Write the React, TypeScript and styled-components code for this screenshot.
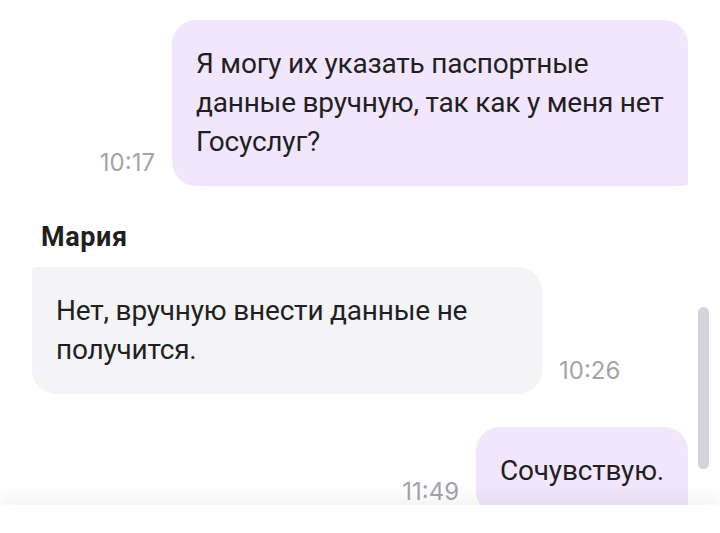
import React from "react";
import styled, { createGlobalStyle } from "styled-components";

const Global = createGlobalStyle`
  html, body { margin: 0; padding: 0; background: #ffffff; }
  body { font-family: Roboto, "Noto Sans", sans-serif; -webkit-font-smoothing: antialiased; }
`;

const Screen = styled.div`
  width: 720px;
  height: 533px;
  display: flex;
  flex-direction: column;
  position: relative;
  overflow: hidden;
  background: #fff;
`;

const Feed = styled.div`
  height: 505px;
  flex: none;
  overflow: hidden;
  display: flex;
  flex-direction: column;
  padding: 20px 32px 0 32px;
  box-sizing: border-box;
`;

const Row = styled.div<{ $out?: boolean; $mt?: number }>`
  display: flex;
  flex-direction: ${(p) => (p.$out ? "row-reverse" : "row")};
  align-items: flex-end;
  gap: 17px;
  margin-top: ${(p) => p.$mt ?? 0}px;
  flex: none;
`;

const Bubble = styled.div<{ $out?: boolean; $max: number }>`
  max-width: ${(p) => p.$max}px;
  box-sizing: border-box;
  padding: 24px 24px 25px;
  font-size: 28px;
  line-height: 39px;
  letter-spacing: -0.2px;
  color: #1f1f24;
  background: ${(p) => (p.$out ? "#f2e6fc" : "#f4f4f6")};
  border-radius: ${(p) => (p.$out ? "24px 24px 3px 24px" : "4px 24px 24px 24px")};
`;

const Time = styled.div`
  font-family: Inter, Roboto, sans-serif;
  font-size: 24px;
  line-height: 20px;
  color: #a4a4a9;
  margin-bottom: 13px;
  flex: none;
`;

const Group = styled.div`
  display: flex;
  flex-direction: column;
  margin-top: 37px;
  flex: none;
`;

const Name = styled.div`
  font-size: 27px;
  line-height: 28px;
  font-weight: 700;
  letter-spacing: 0.6px;
  color: #1f1f24;
  padding-left: 9px;
  margin-bottom: 16px;
`;

const Footer = styled.div`
  flex: 1;
  background: #fff;
  position: relative;
  z-index: 1;
  box-shadow: 0 -6px 22px rgba(0, 0, 0, 0.06);
`;

const Thumb = styled.div`
  position: absolute;
  left: 698px;
  top: 307px;
  width: 11px;
  height: 162px;
  border-radius: 6px;
  background: #d3d3db;
  z-index: 2;
`;

export default function App() {
  return (
    <>
      <Global />
      <Screen>
        <Feed>
          <Row $out>
            <Bubble $out $max={516}>
              Я могу их указать паспортные данные вручную, так как у меня нет Госуслуг?
            </Bubble>
            <Time>10:17</Time>
          </Row>
          <Group>
            <Name>Мария</Name>
            <Row>
              <Bubble $max={510}>Нет, вручную внести данные не получится.</Bubble>
              <Time>10:26</Time>
            </Row>
          </Group>
          <Row $out $mt={33}>
            <Bubble $out $max={516}>Сочувствую.</Bubble>
            <Time>11:49</Time>
          </Row>
        </Feed>
        <Footer />
        <Thumb />
      </Screen>
    </>
  );
}
